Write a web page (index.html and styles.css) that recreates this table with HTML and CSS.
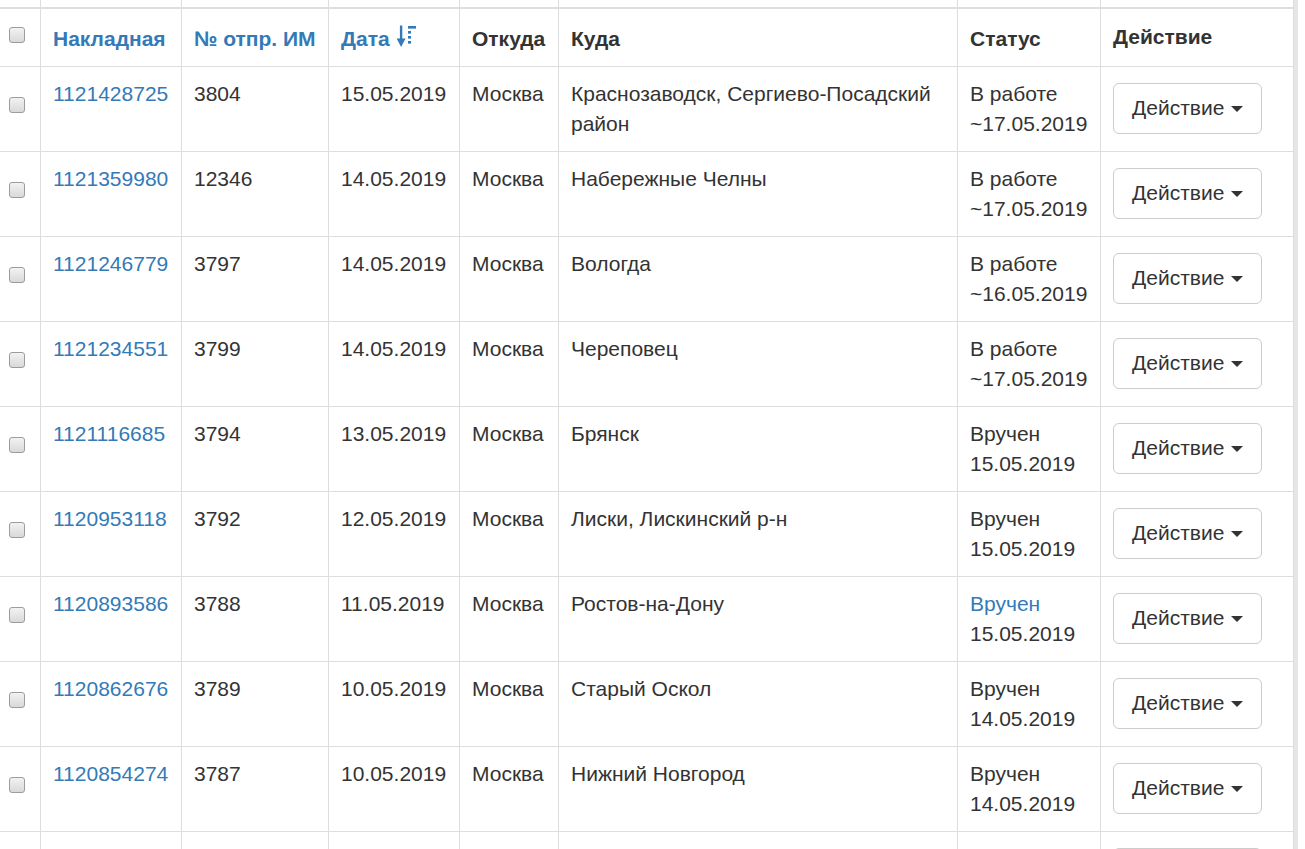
FILE: index.html
```html
<!DOCTYPE html>
<html lang="ru">
<head>
<meta charset="utf-8">
<title>Накладные</title>
<link rel="stylesheet" href="styles.css">
</head>
<body>
<div class="frame">
<table class="grid">
<tbody>
<tr class="pre">
<td class="w-check"></td><td class="w-num"></td><td class="w-im"></td><td class="w-date"></td><td class="w-from"></td><td class="w-to"></td><td class="w-status"></td><td class="w-act"></td>
</tr>
<tr class="head">
<th class="check"><input type="checkbox" class="chk"></th>
<th><a href="#">Накладная</a></th>
<th><a href="#">№ отпр. ИМ</a></th>
<th><a href="#">Дата</a> <svg class="sort" width="22" height="23" viewBox="0 0 22 23" aria-hidden="true"><rect x="4.9" y="0.5" width="2.4" height="15" fill="#337ab7"/><polygon points="1.6,13.5 10.6,13.5 6.1,22" fill="#337ab7"/><rect x="13" y="1" width="8" height="2.6" fill="#337ab7"/><rect x="13" y="6" width="3" height="2.6" fill="#337ab7"/><rect x="13" y="11" width="3" height="2.6" fill="#337ab7"/><rect x="13" y="16" width="3" height="2.6" fill="#337ab7"/></svg></th>
<th>Откуда</th>
<th>Куда</th>
<th>Статус</th>
<th class="act-head">Действие</th>
</tr>
<tr>
<td class="check"><input type="checkbox" class="chk"></td>
<td><a href="#">1121428725</a></td><td>3804</td><td>15.05.2019</td><td>Москва</td>
<td>Краснозаводск, Сергиево-Посадский район</td>
<td>В работе<br>~17.05.2019</td>
<td class="act"><button class="btn">Действие <span class="caret"></span></button></td>
</tr>
<tr>
<td class="check"><input type="checkbox" class="chk"></td>
<td><a href="#">1121359980</a></td><td>12346</td><td>14.05.2019</td><td>Москва</td>
<td>Набережные Челны</td>
<td>В работе<br>~17.05.2019</td>
<td class="act"><button class="btn">Действие <span class="caret"></span></button></td>
</tr>
<tr>
<td class="check"><input type="checkbox" class="chk"></td>
<td><a href="#">1121246779</a></td><td>3797</td><td>14.05.2019</td><td>Москва</td>
<td>Вологда</td>
<td>В работе<br>~16.05.2019</td>
<td class="act"><button class="btn">Действие <span class="caret"></span></button></td>
</tr>
<tr>
<td class="check"><input type="checkbox" class="chk"></td>
<td><a href="#">1121234551</a></td><td>3799</td><td>14.05.2019</td><td>Москва</td>
<td>Череповец</td>
<td>В работе<br>~17.05.2019</td>
<td class="act"><button class="btn">Действие <span class="caret"></span></button></td>
</tr>
<tr>
<td class="check"><input type="checkbox" class="chk"></td>
<td><a href="#">1121116685</a></td><td>3794</td><td>13.05.2019</td><td>Москва</td>
<td>Брянск</td>
<td>Вручен<br>15.05.2019</td>
<td class="act"><button class="btn">Действие <span class="caret"></span></button></td>
</tr>
<tr>
<td class="check"><input type="checkbox" class="chk"></td>
<td><a href="#">1120953118</a></td><td>3792</td><td>12.05.2019</td><td>Москва</td>
<td>Лиски, Лискинский р-н</td>
<td>Вручен<br>15.05.2019</td>
<td class="act"><button class="btn">Действие <span class="caret"></span></button></td>
</tr>
<tr>
<td class="check"><input type="checkbox" class="chk"></td>
<td><a href="#">1120893586</a></td><td>3788</td><td>11.05.2019</td><td>Москва</td>
<td>Ростов-на-Дону</td>
<td><a href="#">Вручен</a><br>15.05.2019</td>
<td class="act"><button class="btn">Действие <span class="caret"></span></button></td>
</tr>
<tr>
<td class="check"><input type="checkbox" class="chk"></td>
<td><a href="#">1120862676</a></td><td>3789</td><td>10.05.2019</td><td>Москва</td>
<td>Старый Оскол</td>
<td>Вручен<br>14.05.2019</td>
<td class="act"><button class="btn">Действие <span class="caret"></span></button></td>
</tr>
<tr>
<td class="check"><input type="checkbox" class="chk"></td>
<td><a href="#">1120854274</a></td><td>3787</td><td>10.05.2019</td><td>Москва</td>
<td>Нижний Новгород</td>
<td>Вручен<br>14.05.2019</td>
<td class="act"><button class="btn">Действие <span class="caret"></span></button></td>
</tr>
<tr class="tail">
<td class="check"></td>
<td></td><td></td><td></td><td></td>
<td></td>
<td></td>
<td class="act"><div class="btn-stub"></div></td>
</tr>
</tbody>
</table>
</div>
</body>
</html>
```
FILE: styles.css
```css
html, body {
  margin: 0;
  padding: 0;
  height: 100%;
  overflow: hidden;
  background: #fff;
}

body {
  font-family: "Liberation Sans", Arial, sans-serif;
  font-size: 21px;
  line-height: 30px;
  color: #333;
}

.frame {
  width: 1298px;
  height: 849px;
  box-sizing: border-box;
  border-right: 4px solid #e6e6e6;
  overflow: hidden;
}

.grid {
  border-collapse: separate;
  border-spacing: 0;
  table-layout: fixed;
  width: 1294px;
}

.grid th,
.grid td {
  box-sizing: border-box;
  border-right: 1px solid #ddd;
  border-bottom: 1px solid #ddd;
  padding: 12px;
  vertical-align: top;
  text-align: left;
}

.grid th {
  padding: 15px 12px 12px;
  font-weight: bold;
  white-space: nowrap;
}

.grid th.act-head {
  padding: 13px 12px 14px;
}

.grid .pre td {
  padding: 0;
  height: 9px;
  border-bottom: 2px solid #dedede;
}

.grid .tail td {
  height: 85px;
}

.w-check { width: 41px; }
.w-num { width: 141px; }
.w-im { width: 147px; }
.w-date { width: 131px; }
.w-from { width: 99px; }
.w-to { width: 399px; }
.w-status { width: 143px; }
.w-act { width: 193px; }

.grid th.check,
.grid td.check {
  padding-left: 9px;
  padding-right: 0;
  vertical-align: middle;
}

.grid td.act {
  padding: 11px 12px 12px;
  vertical-align: middle;
}

a {
  color: #337ab7;
  text-decoration: none;
}

.sort {
  vertical-align: -2px;
}

.chk {
  -webkit-appearance: none;
  appearance: none;
  display: inline-block;
  width: 16px;
  height: 16px;
  margin: 3px 0;
  box-sizing: border-box;
  border: 1px solid #9c9c9c;
  border-radius: 3px;
  background: linear-gradient(#f2f2f2, #d9d9d9);
  vertical-align: baseline;
}

.btn {
  font-family: inherit;
  font-size: 21px;
  line-height: 30px;
  color: #333;
  background: #fff;
  border: 1px solid #ccc;
  border-radius: 6px;
  padding: 9px 18px 10px;
  margin: 0;
  white-space: nowrap;
  cursor: pointer;
}

.btn-stub {
  width: 149px;
  height: 51px;
  box-sizing: border-box;
  border: 1px solid #ccc;
  border-radius: 6px;
}

.caret {
  display: inline-block;
  width: 0;
  height: 0;
  margin-left: 1px;
  vertical-align: middle;
  border-top: 6px solid #333;
  border-left: 6px solid transparent;
  border-right: 6px solid transparent;
}
```
